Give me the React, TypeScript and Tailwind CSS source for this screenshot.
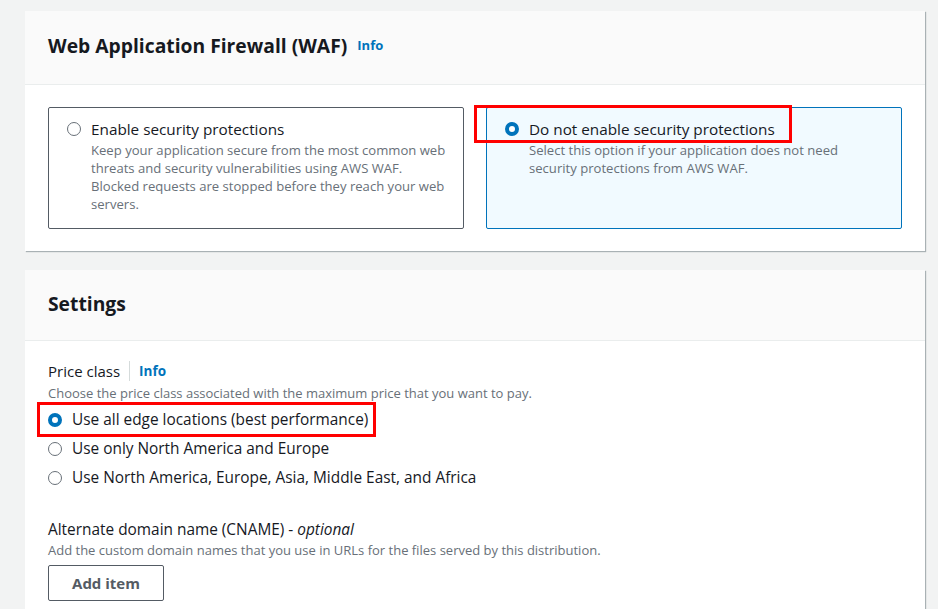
import React from "react";

const font = { fontFamily: '"Open Sans", "Noto Sans", sans-serif' };

function Radio({ checked }: { checked?: boolean }) {
  return checked ? (
    <span className="box-border inline-block h-[14px] w-[14px] shrink-0 rounded-full border-[4px] border-[#0073bb] bg-white" />
  ) : (
    <span className="box-border inline-block h-[14px] w-[14px] shrink-0 rounded-full border-[1.5px] border-[#687078] bg-white" />
  );
}

function Tile({
  title,
  desc,
  checked,
  highlight,
}: {
  title: string;
  desc: string;
  checked?: boolean;
  highlight?: boolean;
}) {
  return (
    <div
      className={
        checked
          ? "h-[122px] flex-1 rounded-[2px] border border-[#0073bb] bg-[#f1faff] pl-[18px] pr-[14px] pt-[11px]"
          : "h-[122px] flex-1 rounded-[2px] border border-[#545b64] bg-white pl-[18px] pr-[14px] pt-[11px]"
      }
    >
      <div className="relative flex items-center gap-[10px]">
        {highlight && (
          <div className="absolute left-[-31px] top-[-14px] h-[38px] w-[318px] border-[3px] border-[#ff0000]" />
        )}
        <Radio checked={checked} />
        <span className="text-[15.3px] leading-[20px] text-[#16191f]">{title}</span>
      </div>
      <p className="mt-[2px] pl-[24px] text-[13.1px] leading-[18px] text-[#687078]">{desc}</p>
    </div>
  );
}

function Option({ label, checked, highlight }: { label: string; checked?: boolean; highlight?: boolean }) {
  return (
    <div className="relative flex h-[29px] items-center gap-[10px]">
      {highlight && (
        <div className="absolute left-[-11px] top-[-3px] h-[35px] w-[339px] border-[3px] border-[#ff0000]" />
      )}
      <Radio checked={checked} />
      <span className="text-[15.4px] leading-[20px] text-[#16191f]">{label}</span>
    </div>
  );
}

export default function App() {
  return (
    <div className="h-[609px] w-[938px] overflow-hidden bg-[#f2f3f3] pl-[25px] pr-[13px] pt-[11px]" style={font}>
      <section className="bg-white shadow-[1px_1px_1px_rgba(0,28,36,0.3)]">
        <div className="flex h-[74px] items-center gap-[10px] border-b border-[#eaeded] bg-[#fafafa] px-[23px] pb-[4px]">
          <h2 className="text-[19.3px] font-bold leading-[22px] text-[#16191f]">Web Application Firewall (WAF)</h2>
          <span className="text-[13px] font-bold text-[#0073bb]">Info</span>
        </div>
        <div className="flex gap-[22px] px-[23px] pb-[22px] pt-[22px]">
          <Tile
            title="Enable security protections"
            desc="Keep your application secure from the most common web threats and security vulnerabilities using AWS WAF. Blocked requests are stopped before they reach your web servers."
          />
          <Tile
            checked
            highlight
            title="Do not enable security protections"
            desc="Select this option if your application does not need security protections from AWS WAF."
          />
        </div>
      </section>

      <section className="mt-[19px] h-[400px] bg-white shadow-[1px_1px_1px_rgba(0,28,36,0.3)]">
        <div className="flex h-[71px] items-center border-b border-[#eaeded] bg-[#fafafa] px-[23px] pb-[3px]">
          <h2 className="text-[19.3px] font-bold leading-[22px] text-[#16191f]">Settings</h2>
        </div>
        <div className="px-[23px] pt-[20px]">
          <div className="flex items-center">
            <span className="text-[15px] leading-[20px] text-[#16191f]">Price class</span>
            <span className="mx-[9px] h-[20px] w-px bg-[#d5dbdb]" />
            <span className="text-[13.5px] font-bold text-[#0073bb]">Info</span>
          </div>
          <p className="mt-[3px] text-[13px] leading-[18px] text-[#687078]">
            Choose the price class associated with the maximum price that you want to pay.
          </p>
          <div className="mt-[3px]">
            <Option checked highlight label="Use all edge locations (best performance)" />
            <Option label="Use only North America and Europe" />
            <Option label="Use North America, Europe, Asia, Middle East, and Africa" />
          </div>

          <div className="mt-[28px] text-[15.4px] leading-[20px] text-[#16191f]">
            Alternate domain name (CNAME) - <i>optional</i>
          </div>
          <p className="mt-[1px] text-[13px] leading-[18px] text-[#687078]">
            Add the custom domain names that you use in URLs for the files served by this distribution.
          </p>
          <button className="mt-[6px] h-[36px] w-[116px] rounded-[2px] border border-[#545b64] bg-white text-[15px] font-bold text-[#545b64]">
            Add item
          </button>
        </div>
      </section>
    </div>
  );
}
